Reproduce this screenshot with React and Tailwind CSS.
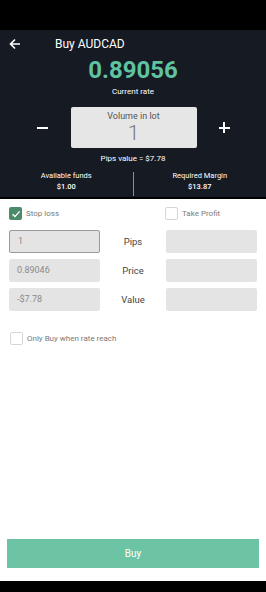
import React from "react";

const Checkbox = ({ checked, label }) => (
  <div className="flex items-center gap-[4px]">
    {checked ? (
      <div className="w-[13px] h-[13px] rounded-[2px] bg-[#4c8a6c] flex items-center justify-center">
        <svg width="10" height="10" viewBox="0 0 10 10" fill="none">
          <path d="M1.5 5.2 L4 7.6 L8.6 2.4" stroke="white" strokeWidth="1.4" />
        </svg>
      </div>
    ) : (
      <div className="w-[13px] h-[13px] rounded-[2px] border border-[#d6d6d6] bg-white" />
    )}
    <span className="text-[8px] text-[#7a7a7a]">{label}</span>
  </div>
);

const Field = ({ value, focused }) => (
  <div
    className={`w-[91px] h-[23px] bg-[#e4e4e4] rounded-[2px] flex items-center pl-[8px] text-[9px] text-[#8a8a8a] ${
      focused ? "border border-[#9a9a9a]" : ""
    }`}
  >
    {value}
  </div>
);

const rows = [
  { left: "1", label: "Pips", focused: true },
  { left: "0.89046", label: "Price" },
  { left: "-$7.78", label: "Value" },
];

export default function App() {
  return (
    <div
      className="w-[266px] h-[592px] flex flex-col bg-white overflow-hidden"
      style={{ fontFamily: "Roboto, 'Liberation Sans', sans-serif" }}
    >
      <div className="h-[30px] bg-black shrink-0" />

      <div className="bg-[#151a23] h-[169px] shrink-0 border-b-2 border-black flex flex-col text-white">
        <div className="h-[28px] flex items-center">
          <svg className="ml-[9px]" width="12" height="12" viewBox="0 0 12 12" fill="none">
            <path d="M11 6 H1.5 M6 1.5 L1.5 6 L6 10.5" stroke="white" strokeWidth="1.6" />
          </svg>
          <span className="ml-[34px] text-[12px]">Buy AUDCAD</span>
        </div>
        <div className="text-center text-[24px] font-bold leading-[24px] text-[#5fc3a0]">
          0.89056
        </div>
        <div className="text-center text-[8px] leading-[10px] mt-[5px]">Current rate</div>

        <div className="flex items-center justify-center mt-[10px]">
          <div className="w-[11px] h-[2px] bg-white mr-[23px]" />
          <div className="w-[126px] h-[41px] bg-[#e6e6e6] rounded-[2px] flex flex-col items-center pt-[3px]">
            <span className="text-[9px] leading-[12px] text-[#555]">Volume in lot</span>
            <span className="text-[21px] leading-[22px] font-light text-[#777]">1</span>
          </div>
          <div className="relative w-[11px] h-[11px] ml-[22px]">
            <div className="absolute left-0 top-[4.5px] w-[11px] h-[2px] bg-white" />
            <div className="absolute top-0 left-[4.5px] w-[2px] h-[11px] bg-white" />
          </div>
        </div>

        <div className="text-center text-[8px] leading-[10px] mt-[6px]">Pips value = $7.78</div>

        <div className="flex mt-[3px] flex-1">
          <div className="flex-1 flex flex-col items-center pt-[3px] text-[7.5px] leading-[11px]">
            <span>Available funds</span>
            <span className="font-medium">$1.00</span>
          </div>
          <div className="w-px bg-[#8a8f98] mt-[5px] h-[24px]" />
          <div className="flex-1 flex flex-col items-center pt-[3px] text-[7.5px] leading-[11px]">
            <span>Required Margin</span>
            <span className="font-medium">$13.87</span>
          </div>
        </div>
      </div>

      <div className="flex-1 flex flex-col">
        <div className="flex items-center mt-[8px] px-[9px]">
          <div className="w-[156px]">
            <Checkbox checked label="Stop loss" />
          </div>
          <Checkbox label="Take Profit" />
        </div>

        <div className="flex flex-col gap-[6px] mt-[10px] px-[9px]">
          {rows.map((r) => (
            <div key={r.label} className="flex items-center">
              <Field value={r.left} focused={r.focused} />
              <span className="flex-1 text-center text-[9.5px] text-[#444] pt-[2px]">{r.label}</span>
              <div className="w-[91px] h-[23px] bg-[#e4e4e4] rounded-[2px]" />
            </div>
          ))}
        </div>

        <div className="mt-[21px] px-[10px]">
          <Checkbox label="Only Buy when rate reach" />
        </div>

        <div className="flex-1" />

        <div className="px-[7px] mb-[13px]">
          <div className="h-[29px] bg-[#6cc4a4] flex items-center justify-center text-[10px] text-white">
            Buy
          </div>
        </div>
      </div>

      <div className="h-[11px] bg-black shrink-0" />
    </div>
  );
}
